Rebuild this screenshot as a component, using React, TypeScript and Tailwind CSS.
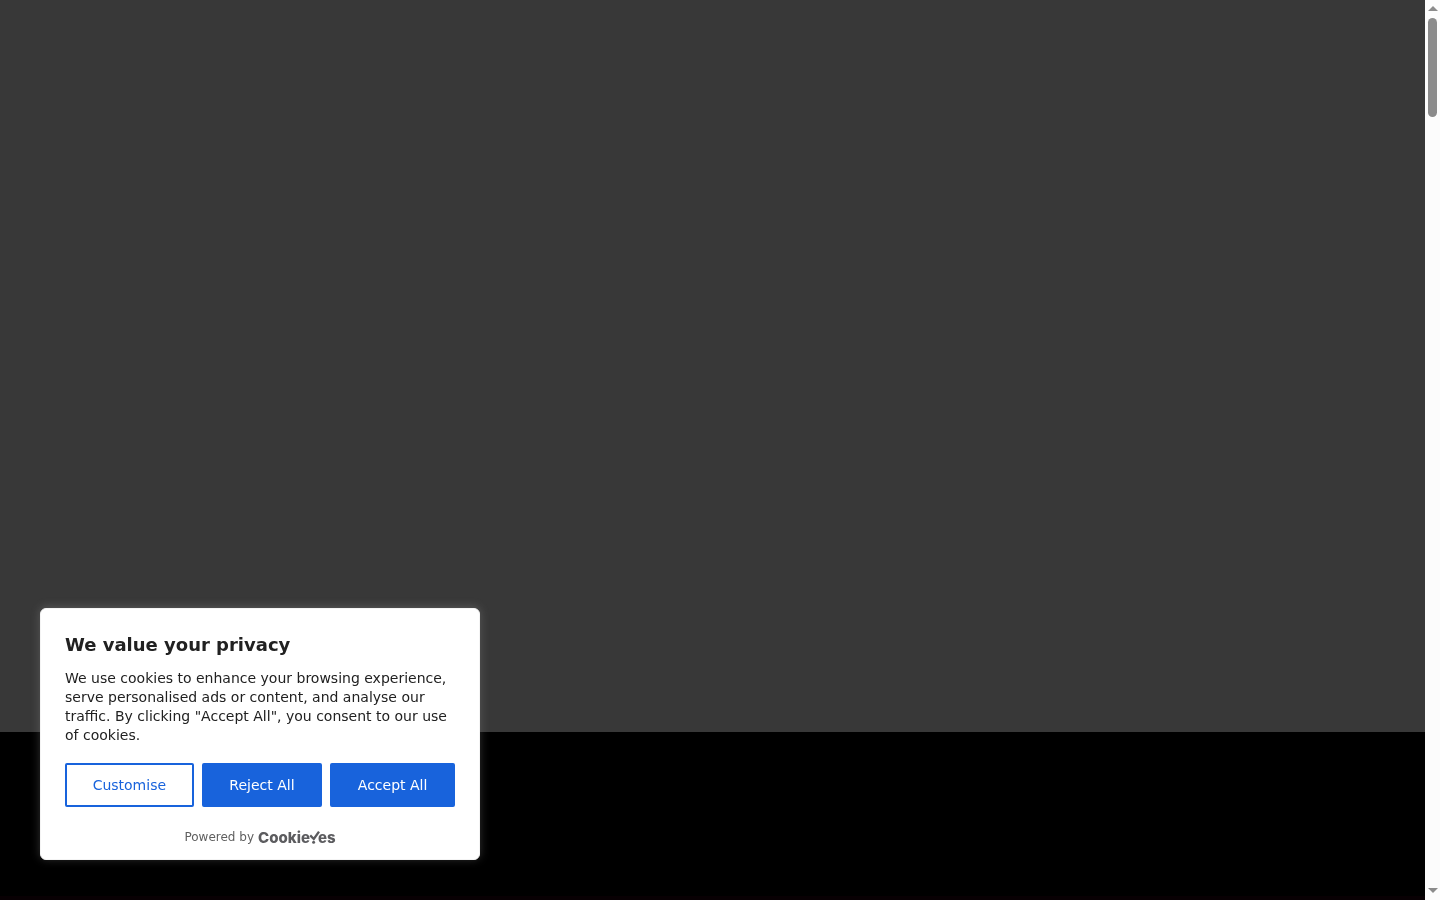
import React, { useState } from "react";

const CookieYesLogo: React.FC = () => (
  <a
    href="#cookieyes"
    aria-label="CookieYes"
    className="flex items-center pt-px font-[Inter,sans-serif] text-[15px] leading-4 font-extrabold text-[#5c5c5f]"
  >
    <span>Cookie</span>
    {/* The Y is a tick with a dot below it */}
    <svg
      viewBox="0 0 12 16"
      className="-mx-0.5 h-4 w-3"
      fill="none"
      stroke="currentColor"
      strokeWidth="2.3"
      aria-hidden="true"
    >
      <path d="M2.2 5.4 L5.8 9 L11 1.6" />
      <circle cx="5.6" cy="12.3" r="1.5" fill="currentColor" stroke="none" />
    </svg>
    <span>es</span>
  </a>
);

const CookieBanner: React.FC<{ onClose: () => void }> = ({ onClose }) => {
  const button =
    "h-11 flex-auto cursor-pointer rounded-xs border-2 border-[#1863dc] px-6 text-sm";

  return (
    <section
      aria-label="We value your privacy"
      className="fixed bottom-10 left-10 w-[440px] max-w-full rounded-md border border-[#f4f4f4] bg-white font-['DejaVu_Sans',sans-serif] text-[#212121] shadow-[0_-1px_10px_0_#acabab4d]"
    >
      <div className="px-6 pt-6">
        <h2 className="mb-3 text-lg leading-6 font-bold">
          We value your privacy
        </h2>
        <p className="text-sm leading-[19px]">
          We use cookies to enhance your browsing experience, serve
          personalised ads or content, and analyse our traffic. By clicking
          "Accept All", you consent to our use of cookies.
        </p>
        <div className="mt-[18px] flex gap-2">
          <button className={`${button} bg-white text-[#1863dc]`}>
            Customise
          </button>
          <button
            onClick={onClose}
            className={`${button} bg-[#1863dc] text-white`}
          >
            Reject All
          </button>
          <button
            onClick={onClose}
            className={`${button} bg-[#1863dc] text-white`}
          >
            Accept All
          </button>
        </div>
      </div>
      <div className="mt-[22px] flex items-start justify-center gap-1 pb-[13px] text-xs leading-4 text-[#5f5f5f]">
        <span>Powered by</span>
        <CookieYesLogo />
      </div>
    </section>
  );
};

const ScrollTrack: React.FC = () => (
  <div
    aria-hidden="true"
    className="flex w-[15px] flex-col items-center justify-between bg-[#fcfcfc] pt-1.5 pb-[7px]"
  >
    <div className="flex flex-col items-center gap-[7px]">
      <svg viewBox="0 0 10 5" className="h-[5px] w-2.5" fill="#8b8b8b">
        <path d="M0 5 L5 0 L10 5 Z" />
      </svg>
      <div className="h-[99px] w-[9px] rounded-full bg-[#8b8b8b]" />
    </div>
    <svg viewBox="0 0 10 5" className="h-[5px] w-2.5" fill="#8b8b8b">
      <path d="M0 0 L5 5 L10 0 Z" />
    </svg>
  </div>
);

const App: React.FC = () => {
  const [bannerOpen, setBannerOpen] = useState(true);

  return (
    <div className="flex h-screen">
      <main className="flex flex-1 flex-col bg-black">
        <div className="min-h-0 flex-1 bg-[#383838]" />
        <div className="h-41 bg-black" />
        <div className="h-1 bg-[#080003]" />
      </main>
      <ScrollTrack />
      {bannerOpen && <CookieBanner onClose={() => setBannerOpen(false)} />}
    </div>
  );
};

export default App;
